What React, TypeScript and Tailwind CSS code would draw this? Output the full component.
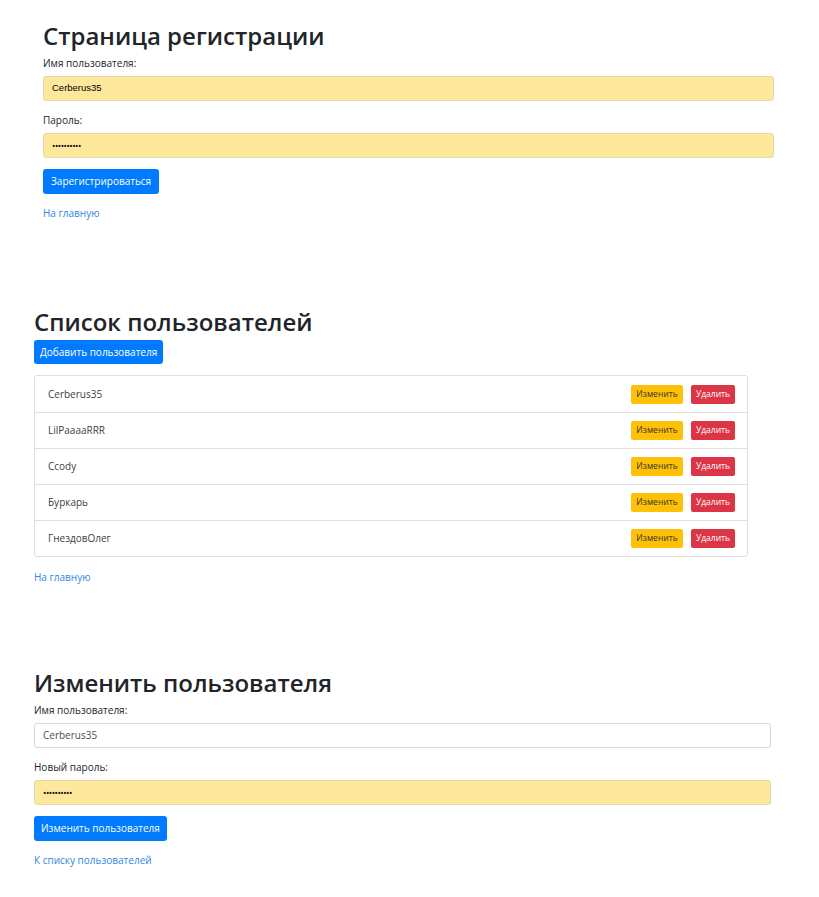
const users = ["Cerberus35", "LilPaaaaRRR", "Ccody", "Буркарь", "ГнездовОлег"];

const font = "[font-family:'Open_Sans','Noto_Sans',sans-serif]";

function Label({ children }: { children: string }) {
  return <div className="h-4 text-[10px] leading-4 text-[#212529]">{children}</div>;
}

export default function App() {
  return (
    <div className={`${font} min-h-screen bg-white pb-6 text-[#212529]`}>
      {/* Регистрация */}
      <section className="ml-[43px] w-[731px] pt-[20px]">
        <h1 className="h-[31px] text-[24px] font-semibold leading-[31px] text-[#212529]">Страница регистрации</h1>
        <div className="mt-[4px]">
          <Label>Имя пользователя:</Label>
        </div>
        <div className="mt-[5px] flex h-[25px] items-center rounded-[3px] border border-[#e3d9b0] bg-[#fee89b] px-[8px] text-[9.5px] text-black [font-family:'Liberation_Sans',sans-serif]">
          Cerberus35
        </div>
        <div className="mt-[11px]">
          <Label>Пароль:</Label>
        </div>
        <div className="mt-[5px] flex h-[25px] items-center rounded-[3px] border border-[#e3d9b0] bg-[#fee89b] px-[8px] text-[9px] tracking-[-0.5px] text-black">
          ••••••••••
        </div>
        <button className="mt-[11px] h-[25px] rounded-[3px] bg-[#007bff] px-[8px] text-[10px] text-white">
          Зарегистрироваться
        </button>
        <div className="mt-[11px] h-4 text-[10px] leading-4 text-[#2f86e6]">На главную</div>
      </section>

      {/* Список */}
      <section className="ml-[34px] w-[714px] pt-[85px]">
        <h1 className="h-[31px] text-[24px] font-semibold leading-[31px]">Список пользователей</h1>
        <button className="mt-[3px] h-[24px] rounded-[3px] bg-[#007bff] px-[6px] text-[10px] text-white">
          Добавить пользователя
        </button>
        <div className="mt-[11px] rounded-[3px] border border-[#dfdfdf]">
          {users.map((u, i) => (
            <div
              key={u}
              className={`flex h-[36px] items-center justify-between pl-[13px] pr-[12px] text-[10px] text-[#3a3f44] ${
                i > 0 ? "border-t border-[#dfdfdf]" : ""
              }`}
            >
              <span>{u}</span>
              <div className="flex gap-[8px]">
                <button className="h-[19px] w-[52px] rounded-[2px] bg-[#ffc107] text-[8.5px] text-[#3a3320]">Изменить</button>
                <button className="h-[19px] w-[44px] rounded-[2px] bg-[#dc3545] text-[8.5px] text-white">Удалить</button>
              </div>
            </div>
          ))}
        </div>
        <div className="mt-[12px] h-4 text-[10px] leading-4 text-[#2f86e6]">На главную</div>
      </section>

      {/* Изменить */}
      <section className="ml-[34px] w-[737px] pt-[82px]">
        <h1 className="h-[31px] text-[24px] font-semibold leading-[31px]">Изменить пользователя</h1>
        <div className="mt-[4px]">
          <Label>Имя пользователя:</Label>
        </div>
        <div className="mt-[5px] flex h-[25px] items-center rounded-[3px] border border-[#d6d9dc] bg-white px-[8px] text-[10px] text-[#495057]">
          Cerberus35
        </div>
        <div className="mt-[11px]">
          <Label>Новый пароль:</Label>
        </div>
        <div className="mt-[5px] flex h-[25px] items-center rounded-[3px] border border-[#e3d9b0] bg-[#fee89b] px-[8px] text-[9px] tracking-[-0.5px] text-black">
          ••••••••••
        </div>
        <button className="mt-[11px] h-[25px] rounded-[3px] bg-[#007bff] px-[7px] text-[10px] text-white">
          Изменить пользователя
        </button>
        <div className="mt-[11px] h-4 text-[10px] leading-4 text-[#2f86e6]">К списку пользователей</div>
      </section>
    </div>
  );
}
